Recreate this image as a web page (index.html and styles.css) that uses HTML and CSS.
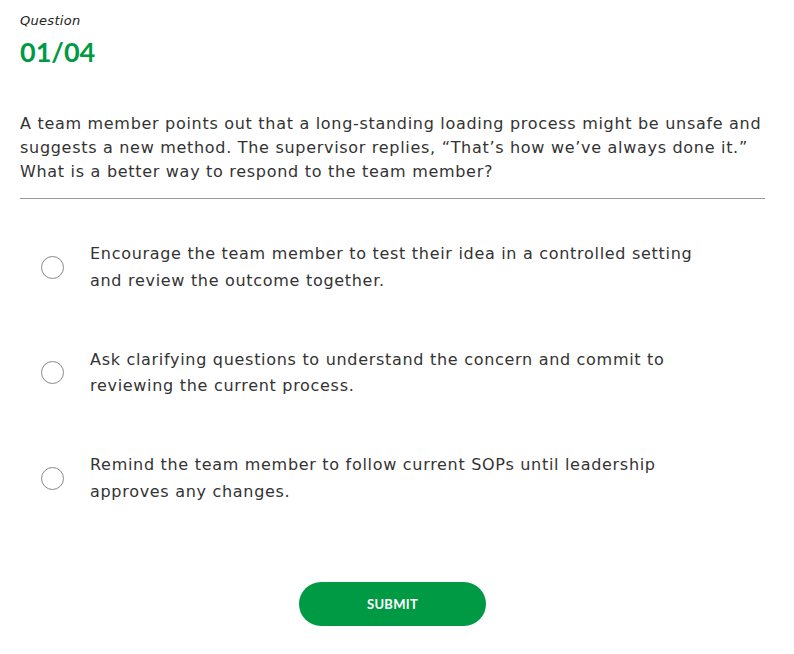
FILE: index.html
```html
<!DOCTYPE html>
<html>
<head>
<meta charset="utf-8">
<link rel="stylesheet" href="styles.css">
</head>
<body>
<div class="quiz">
  <div class="label">Question</div>
  <div class="count">01/04</div>
  <p class="prompt">A team member points out that a long-standing loading process might be unsafe and suggests a new method. The supervisor replies, “That’s how we’ve always done it.” What is a better way to respond to the team member?</p>
  <div class="options">
    <label class="option"><span class="radio"></span><span class="otext">Encourage the team member to test their idea in a controlled setting and review the outcome together.</span></label>
    <label class="option"><span class="radio"></span><span class="otext">Ask clarifying questions to understand the concern and commit to reviewing the current process.</span></label>
    <label class="option"><span class="radio"></span><span class="otext">Remind the team member to follow current SOPs until leadership approves any changes.</span></label>
  </div>
  <div class="actions"><button class="submit">SUBMIT</button></div>
</div>
</body>
</html>
```
FILE: styles.css
```css
html, body { margin: 0; padding: 0; background: #fff; }
body { font-family: "DejaVu Sans", "Open Sans", sans-serif; color: #222; }
.quiz { padding: 12px 29px 0 20px; }
.label { font-style: italic; font-size: 13px; letter-spacing: 0.3px; line-height: 18px; color: #222; }
.count { font-family: Lato, sans-serif; font-weight: 700; font-size: 27px; line-height: 32px; color: #009a44; margin-top: 6px; }
.prompt { margin: 44px 0 0; font-size: 16px; letter-spacing: 0.7px; line-height: 24px; color: #333; padding-bottom: 14px; border-bottom: 1px solid #999; }
.options { display: flex; flex-direction: column; gap: 52.5px; margin-top: 42px; padding-left: 21px; }
.option { display: flex; align-items: center; gap: 26px; }
.radio { width: 23px; height: 23px; border: 1px solid #888; border-radius: 50%; flex: none; box-sizing: border-box; margin-bottom: 1px; }
.otext { font-size: 16px; letter-spacing: 0.7px; line-height: 26.5px; color: #333; max-width: 615px; }
.actions { display: flex; justify-content: center; margin-top: 77px; }
.submit { width: 187px; height: 44px; border: none; border-radius: 22px; background: #009a44; color: #fff; font-family: Lato, sans-serif; font-weight: 700; font-size: 13px; letter-spacing: 0.3px; padding-bottom: 2px; }
```
